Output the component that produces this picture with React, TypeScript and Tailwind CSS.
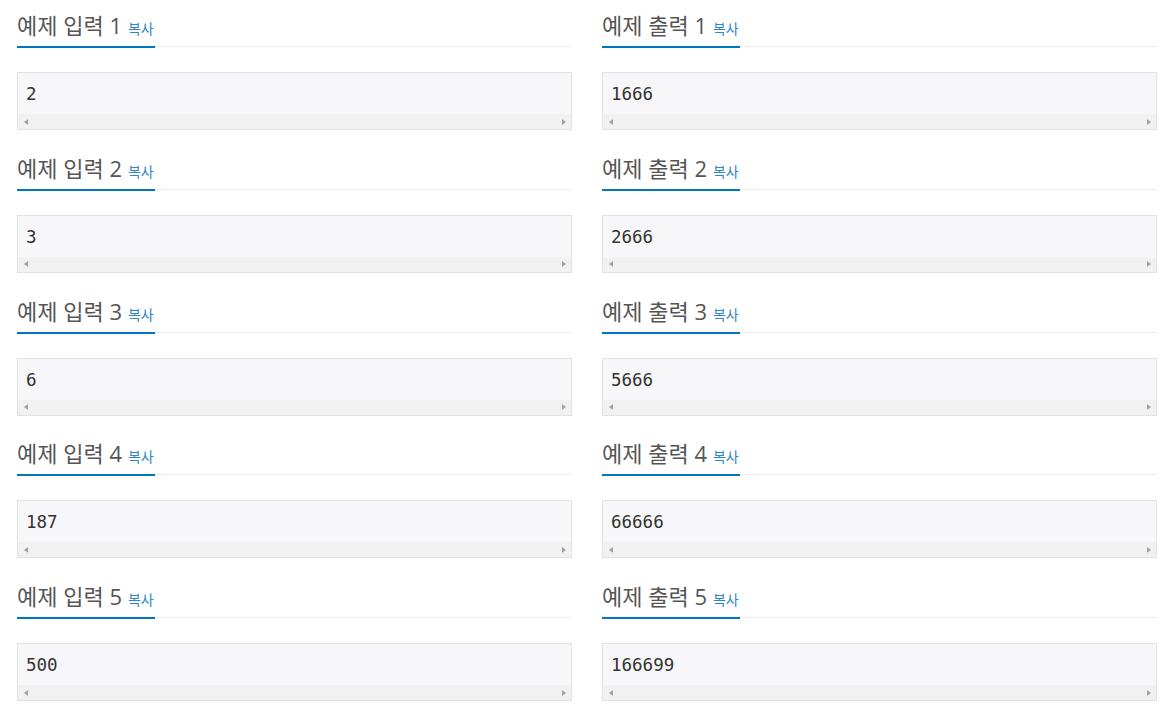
import React from "react";

const rows: [string, string][] = [
  ["2", "1666"],
  ["3", "2666"],
  ["6", "5666"],
  ["187", "66666"],
  ["500", "166699"],
];

function Sample({ title, value }: { title: string; value: string }) {
  return (
    <div className="mb-[12.75px]">
      <div className="border-b border-dotted border-[#dddddd]">
        <div
          className="w-fit flex items-baseline gap-[6px] pt-[13px] pb-[9px] pr-[1px] mb-[-2px] border-b-2 border-[#0076c0] whitespace-nowrap"
          style={{ fontFamily: '"Open Sans", "Noto Sans CJK KR", sans-serif' }}
        >
          <span className="text-[22px] leading-[24px] text-[#555555]">{title}</span>
          <span className="text-[14px] leading-[14px] text-[#2e86c8]">복사</span>
        </div>
      </div>
      <div className="mt-[25px] border border-[#e1e1e8] bg-[#f7f7f9]">
        <div
          className="px-[8px] pt-[11px] pb-[9px] text-[17.5px] leading-[21px] text-[#333333]"
          style={{ fontFamily: '"DejaVu Sans Mono", monospace' }}
        >
          {value}
        </div>
        <div className="h-[15px] bg-[#f1f1f1] flex items-center justify-between">
          <div className="w-[15px] h-[15px] flex items-center justify-center">
            <div className="w-0 h-0 border-y-[3.5px] border-y-transparent border-r-[4px] border-r-[#a3a3a3]" />
          </div>
          <div className="w-[15px] h-[15px] flex items-center justify-center">
            <div className="w-0 h-0 border-y-[3.5px] border-y-transparent border-l-[4px] border-l-[#a3a3a3]" />
          </div>
        </div>
      </div>
    </div>
  );
}

export default function App() {
  return (
    <div className="w-[1168px] h-[716px] bg-white overflow-hidden pl-[17px] pr-[11px]">
      <div className="grid grid-cols-2 gap-x-[30px]">
        {rows.map(([inp, out], i) => (
          <React.Fragment key={i}>
            <Sample title={`예제 입력 ${i + 1}`} value={inp} />
            <Sample title={`예제 출력 ${i + 1}`} value={out} />
          </React.Fragment>
        ))}
      </div>
    </div>
  );
}
